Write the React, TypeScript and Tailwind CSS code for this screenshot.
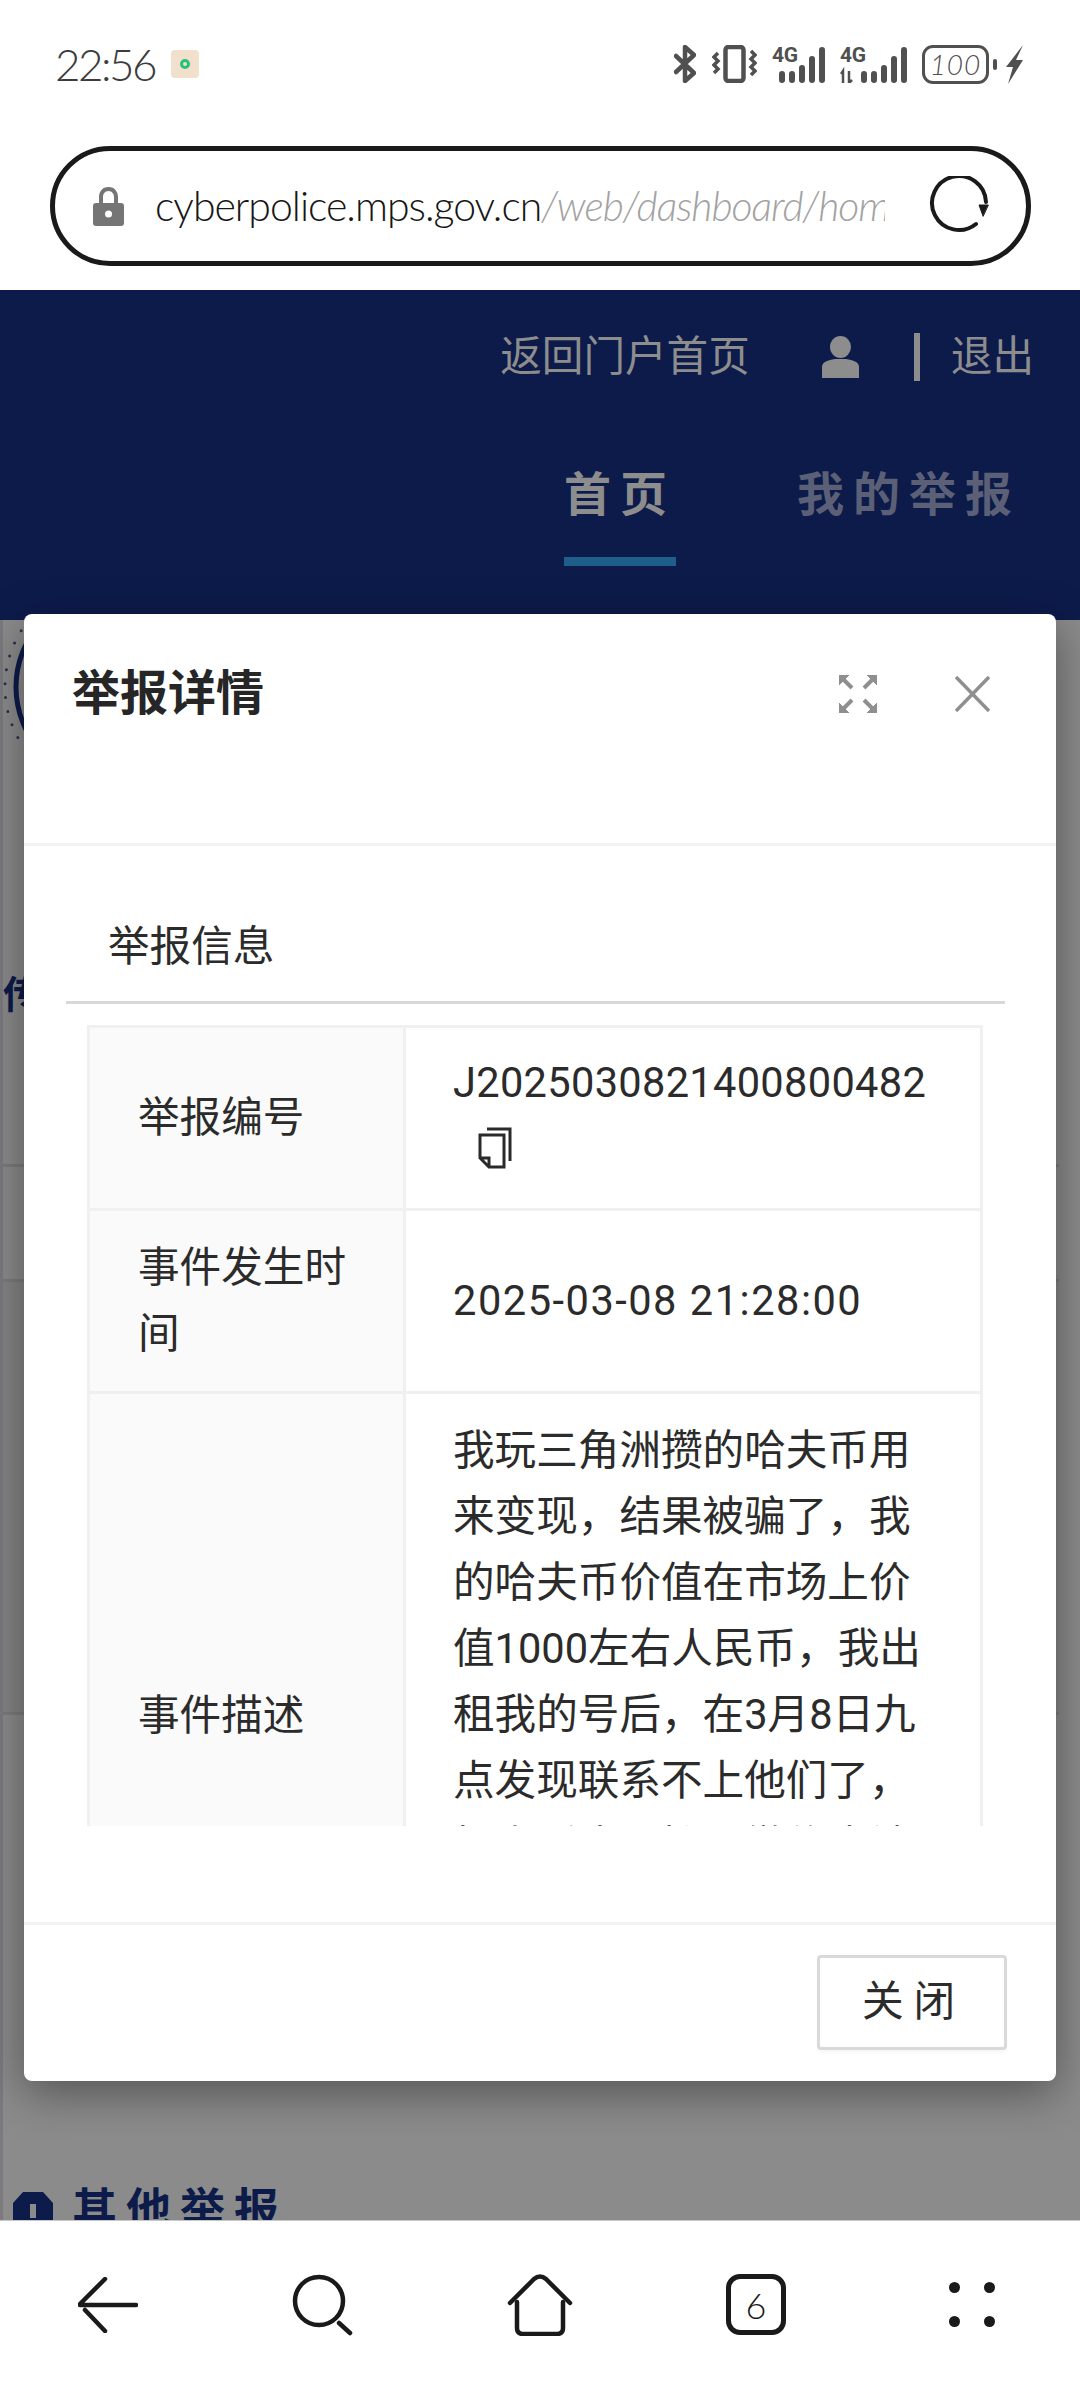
import React from "react";

const cjk = "font-['Roboto','Noto_Sans_CJK_SC',sans-serif]";
const hand = "font-['Lato','Noto_Sans_CJK_SC',sans-serif]";

const SignalBars = ({ offset }: { offset: number }) => (
  <g fill="#505050">
    <rect x={offset} y="26" width="6" height="12" rx="3" />
    <rect x={offset + 10} y="26" width="6" height="12" rx="3" />
    <rect x={offset + 20} y="20" width="6" height="18" rx="3" />
    <rect x={offset + 30} y="11" width="6" height="27" rx="3" />
    <rect x={offset + 40} y="2" width="6" height="36" rx="3" />
  </g>
);

// status bar icons
const StatusIcons = () => (
  <div className="flex items-center">
    <svg width="22" height="38" viewBox="0 0 22 38" fill="none" stroke="#505050" strokeWidth="4.500" strokeLinecap="round" strokeLinejoin="round">
      <path d="M2 11 20 28 11 36V2l9 8L2 27" />
    </svg>
    <svg className="ml-[16px]" width="45" height="38" viewBox="0 0 45 38" fill="none" stroke="#505050" strokeWidth="3.500">
      <rect x="13.500" y="2" width="18" height="34" rx="3" strokeWidth="4.500" />
      <path d="M6 8 2 12l4 4-4 4 4 4-4 4M39 6l4 4-4 4 4 4-4 4 4 4-4 4" />
    </svg>
    <svg className="ml-[15px]" width="53" height="38" viewBox="0 0 53 38">
      <text x="0" y="17" fontSize="21" fontWeight="700" fill="#505050" fontFamily="Roboto" textLength="26">4G</text>
      <SignalBars offset={7} />
    </svg>
    <svg className="ml-[15px]" width="67" height="38" viewBox="0 0 67 38">
      <text x="0" y="17" fontSize="21" fontWeight="700" fill="#505050" fontFamily="Roboto" textLength="26">4G</text>
      <path d="M3 38V26l-2 3M9 26v12l3-3" fill="none" stroke="#505050" strokeWidth="2.500" />
      <SignalBars offset={21} />
    </svg>
    <div className="ml-[15px] flex h-[39px] w-[67px] items-center justify-center rounded-[11px] border-[3px] border-[#505050]">
      <span className={`${hand} text-[28px] font-light italic leading-none tracking-[1px] text-[#505050]`}>100</span>
    </div>
    <div className="ml-[4px] h-[11px] w-[4px] rounded-full bg-[#505050]" />
    <svg className="ml-[9px]" width="17" height="39" viewBox="0 0 17 39" fill="#505050">
      <path d="M17 0 0 22h7L2 39l15-24h-7z" />
    </svg>
  </div>
);

const AddressBar = () => (
  <div className="mx-[50px] flex h-[120px] w-[981px] items-center rounded-[60px] border-[5px] border-[#1a1a1a] bg-white pl-[38px]">
    <svg width="31" height="39" viewBox="0 0 31 39" fill="#757575">
      <path d="M15.5 0C9 0 6 5 6 10v6H3a3 3 0 0 0-3 3v17a3 3 0 0 0 3 3h25a3 3 0 0 0 3-3V19a3 3 0 0 0-3-3h-3v-6c0-5-3-10-9.500-10ZM10 16v-6c0-3 2-6 5.500-6s5.500 3 5.500 6v6Z" />
      <circle cx="15.500" cy="27" r="3.500" fill="#fff" />
    </svg>
    <div className={`${hand} ml-[31px] w-[730px] overflow-hidden whitespace-nowrap text-[41px] font-light leading-[60px] tracking-[-1px] text-[#161616]`}>
      cyberpolice.mps.gov.cn<span className="italic text-[#a2a2a2]">/web/dashboard/home</span>
    </div>
    <svg className="ml-[44px]" width="60" height="60" viewBox="0 0 60 60" fill="none" stroke="#1a1a1a" strokeWidth="4" strokeLinecap="round">
      <path d="M47 48A27 27 0 1 1 57 26" />
      <path d="M54 40l-4-11h9z" fill="#1a1a1a" strokeWidth="1" />
    </svg>
  </div>
);

const Nav = () => (
  <div className={`${cjk} h-[330px] bg-[#0d1b4b]`}>
    <div className="flex h-[134px] items-center justify-end pr-[46px] text-[41.6px] text-[#8d8d8d]">
      <span>返回门户首页</span>
      <svg className="ml-[72px]" width="37" height="42" viewBox="0 0 37 42" fill="#8d8d8d">
        <ellipse cx="18.500" cy="11" rx="10.500" ry="11" />
        <path d="M0 42V31c0-5 6-7 13-8h11c7 1 13 3 13 8v11z" />
      </svg>
      <div className="ml-[55px] h-[48px] w-[6px] bg-[#8d8d8d]" />
      <span className="ml-[31px]">退出</span>
    </div>
    <div className="flex justify-end pr-[59px] text-[47px] font-bold tracking-[9px]">
      <div className="-mt-[2px] flex h-[144px] w-[112px] items-center border-b-[9px] border-[#1d5f8a] pt-[11px] text-[#8d8d8d]">首页</div>
      <div className="-mt-[2px] ml-[121px] flex h-[144px] items-center pt-[2px] text-[#5b6076]">我的举报</div>
    </div>
  </div>
);

// the dimmed page that sits behind the dialog
const DimmedPage = () => (
  <div className={`${cjk} relative flex h-[1600px] flex-col overflow-hidden border-l-[3px] border-[#7b7b7f] bg-[#8b8b8b] pr-[21px]`}>
    <svg className="absolute left-0 top-0" width="30" height="140" viewBox="0 0 30 140" fill="none">
      <circle cx="108" cy="67" r="95" stroke="#0d1b4b" strokeWidth="5" />
      <circle cx="108" cy="67" r="106" stroke="#2b3050" strokeWidth="3" strokeLinecap="round" strokeDasharray="0 14" />
    </svg>
    <div className="h-[547px] shrink-0 border-b-[3px] border-[#7c7c7c] pt-[345px] text-[38px] font-bold leading-[60px] text-[#0d1b4b]">传</div>
    <div className="mt-[112px] h-[436px] shrink-0 border-y-[3px] border-[#7c7c7c] bg-[#858585]" />
    <div className="mt-[466px] flex shrink-0 items-start">
      <svg className="ml-[10px] mt-[11px]" width="40" height="48" viewBox="0 0 40 48" fill="#0d1b4b">
        <path d="M10 0h20l10 11v37H0V11z" />
        <rect x="17" y="12" width="6" height="14" fill="#8b8b8b" />
      </svg>
      <span className="ml-[19px] text-[45px] font-bold leading-[60px] tracking-[9px] text-[#0d1b4b]">其他举报</span>
    </div>
  </div>
);

const CopyIcon = () => (
  <svg width="34" height="42" viewBox="0 0 34 42" fill="none" stroke="#2a2a2a" strokeWidth="3">
    <path d="M9 2h23v32" />
    <path d="M2 8h24v32H11l-9-9zM2 31h9v9" />
  </svg>
);

const description =
  "我玩三角洲攒的哈夫币用来变现，结果被骗了，我的哈夫币价值在市场上价值1000左右人民币，我出租我的号后，在3月8日九点发现联系不上他们了，打电话也不接，微信也被拉黑了，希望警方能帮我追回损失，谢谢。";

const Detail = () => (
  <div className="h-[801px] overflow-hidden">
    <table className="w-[896px] table-fixed border-collapse text-[41.6px] leading-[66px] text-[#2b2b2b]">
      <tbody>
        <tr>
          <td className="h-[183px] w-[316px] border-[3px] border-[#f0f0f0] bg-[#fafafa] px-[48px] pb-[1px]">举报编号</td>
          <td className="border-[3px] border-[#f0f0f0] px-[47px] pt-[22px] align-top">
            <div className="whitespace-nowrap tracking-[0.3px]">J2025030821400800482</div>
            <div className="ml-[25px] mt-[11px]"><CopyIcon /></div>
          </td>
        </tr>
        <tr>
          <td className="h-[183px] border-[3px] border-[#f0f0f0] bg-[#fafafa] px-[48px]">事件发生时间</td>
          <td className="border-[3px] border-[#f0f0f0] px-[47px] tracking-[1.5px]">2025-03-08 21:28:00</td>
        </tr>
        <tr>
          <td className="h-[646px] border-[3px] border-[#f0f0f0] bg-[#fafafa] px-[48px]">事件描述</td>
          <td className="border-[3px] border-[#f0f0f0] px-[47px] pt-[24px] align-top">{description}</td>
        </tr>
      </tbody>
    </table>
  </div>
);

const Dialog = () => (
  <div className={`${cjk} absolute left-[24px] top-[614px] flex h-[1467px] w-[1032px] flex-col rounded-[8px] bg-white shadow-[0_12px_45px_rgba(0,0,0,0.4)]`}>
    <div className="flex h-[232px] items-start border-b-[3px] border-[#f2f2f2] pl-[48px] pr-[66px] pt-[45px]">
      <span className="flex-1 text-[48px] font-bold leading-[70px] text-[#262626]">举报详情</span>
      <svg className="mt-[16px]" width="38" height="38" viewBox="0 0 38 38" fill="#8f8f8f" stroke="#8f8f8f">
        <path d="M0 0h10L0 10zM38 0H28l10 10zM0 38h10L0 28zM38 38H28l10-10z" strokeWidth="1" />
        <path d="M4 4l9 9M34 4l-9 9M4 34l9-9M34 34l-9-9" strokeWidth="4" />
      </svg>
      <svg className="ml-[78px] mt-[17px]" width="35" height="36" viewBox="0 0 35 36" fill="none" stroke="#8f8f8f" strokeWidth="3.500">
        <path d="M1 1l33 34M34 1 1 35" />
      </svg>
    </div>
    <div className="flex-1 pl-[42px] pr-[51px]">
      <div className="h-[158px] border-b-[3px] border-[#d8d8d8] pl-[42px] pt-[68px] text-[41.600px] leading-[66px] text-[#2b2b2b]">举报信息</div>
      <div className="ml-[21px] mt-[21px]"><Detail /></div>
    </div>
    <div className="flex h-[159px] justify-end border-t-[3px] border-[#f2f2f2] pr-[49px] pt-[30px]">
      <div className="flex h-[95px] w-[190px] items-center justify-center rounded-[4px] border-[3px] border-[#d9d9d9] pl-[3px] text-[41.600px] tracking-[10px] text-[#2b2b2b] shadow-[0_3px_3px_rgba(0,0,0,0.03)]">关闭</div>
    </div>
  </div>
);

const BottomBar = () => (
  <div className="grid h-[168px] grid-cols-5 items-center justify-items-center border-t border-[#c8c8c8] bg-white">
    <svg width="60" height="56" viewBox="0 0 60 56" fill="none" stroke="#1a1a1a" strokeWidth="4.500" strokeLinecap="round">
      <path d="M2 28h56M27 2 2 27M27 54 7 33" />
    </svg>
    <svg width="64" height="62" viewBox="0 0 64 62" fill="none" stroke="#1a1a1a" strokeWidth="4.500" strokeLinecap="round">
      <circle cx="27" cy="27" r="24" />
      <path d="M47 49 58 59" />
    </svg>
    <svg width="66" height="62" viewBox="0 0 66 62" fill="none" stroke="#1a1a1a" strokeWidth="4.500" strokeLinecap="round" strokeLinejoin="round">
      <path d="M3 29 27 5q6-5 12 0l24 24" />
      <path d="M10 28v26q0 6 6 6h34q6 0 6-6V28" />
    </svg>
    <div className="flex h-[61px] w-[60px] items-center justify-center rounded-[14px] border-[5px] border-[#1a1a1a]">
      <span className={`${hand} text-[36px] font-light leading-none text-[#1a1a1a]`}>6</span>
    </div>
    <div className="grid grid-cols-2 gap-x-[24px] gap-y-[23px]">
      <div className="h-[11px] w-[11px] rounded-full bg-[#1a1a1a]" />
      <div className="h-[11px] w-[11px] rounded-full bg-[#1a1a1a]" />
      <div className="h-[11px] w-[11px] rounded-full bg-[#1a1a1a]" />
      <div className="h-[11px] w-[11px] rounded-full bg-[#1a1a1a]" />
    </div>
  </div>
);

const App = () => {
  return (
    <div className="relative h-[2388px] w-[1080px] overflow-hidden bg-white">
      {/* status bar */}
      <div className="flex h-[130px] items-center justify-between pl-[55px] pr-[57px] pb-[2px]">
        <div className="flex items-center">
          <span className={`${hand} text-[44px] font-light leading-none tracking-[-2.5px] text-[#3c3c3c]`}>22:56</span>
          <div className="ml-[16px] flex h-[28px] w-[28px] items-center justify-center rounded-[4px] bg-[#f0e0cc]">
            <div className="h-[10px] w-[10px] rounded-full border-[3px] border-[#27c27a]" />
          </div>
        </div>
        <StatusIcons />
      </div>
      <div className="h-[160px] pt-[16px]">
        <AddressBar />
      </div>
      <Nav />
      <DimmedPage />
      <BottomBar />
      <Dialog />
    </div>
  );
};

export default App;
